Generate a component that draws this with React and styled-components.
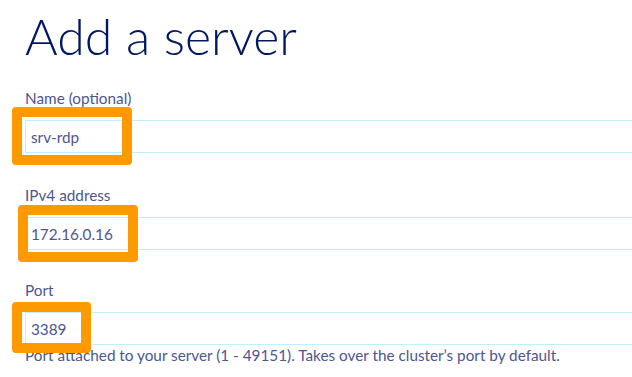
import React from 'react';
import styled, { createGlobalStyle } from 'styled-components';

const GlobalStyle = createGlobalStyle`
  html, body {
    margin: 0;
    padding: 0;
    background: #fff;
  }
  body {
    font-family: Lato, "Source Sans Pro", "Noto Sans", sans-serif;
    color: #4d5592;
  }
`;

const Page = styled.div`
  width: 632px;
  height: 377px;
  overflow: hidden;
  padding: 0 0 0 25px;
  box-sizing: border-box;
`;

const Title = styled.h1`
  margin: 0;
  padding-top: 6px;
  font-family: Lato, sans-serif;
  font-weight: 300;
  font-size: 50px;
  line-height: 60px;
  color: #00185e;
`;

const Form = styled.div`
  display: flex;
  flex-direction: column;
  margin-top: 23px;
`;

const Field = styled.div`
  position: relative;
  margin-bottom: ${p => p.gap}px;
`;

const Label = styled.label`
  display: block;
  font-size: 15.3px;
  line-height: 19px;
  color: #4d5592;
  margin-bottom: 12px;
`;

const Input = styled.div`
  height: 31px;
  border: 1px solid #bef1ff;
  border-right: none;
  display: flex;
  align-items: center;
  padding-left: 5px;
  font-size: 15.3px;
  color: #4d5592;
`;

const Help = styled.div`
  font-size: 15.3px;
  line-height: 19px;
  margin-top: 1px;
  color: #4d5592;
`;

const Highlight = styled.div`
  position: absolute;
  left: ${p => p.x}px;
  top: ${p => p.y}px;
  width: ${p => p.w}px;
  height: ${p => p.h}px;
  border: 10px solid #ff9900;
  border-radius: 4px;
  box-sizing: border-box;
  pointer-events: none;
`;

export default function App() {
  return (
    <Page>
      <GlobalStyle />
      <Title>Add a server</Title>
      <Form>
        <Field gap={33}>
          <Label>Name (optional)</Label>
          <Input>srv-rdp</Input>
          <Highlight x={-13} y={18} w={120} h={58} />
        </Field>
        <Field gap={31}>
          <Label>IPv4 address</Label>
          <Input>172.16.0.16</Input>
          <Highlight x={-7} y={19} w={120} h={57} />
        </Field>
        <Field gap={0}>
          <Label>Port</Label>
          <Input>3389</Input>
          <Highlight x={-13} y={21} w={79} h={51} />
          <Help>Port attached to your server (1 - 49151). Takes over the cluster’s port by default.</Help>
        </Field>
      </Form>
    </Page>
  );
}
